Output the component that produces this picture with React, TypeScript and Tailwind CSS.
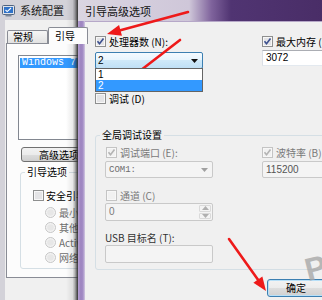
import React from "react";

function Check({ checked = false, disabled = false }: { checked?: boolean; disabled?: boolean }) {
  return (
    <svg width="11" height="11" viewBox="0 0 11 11" className="block shrink-0">
      <rect x="0.5" y="0.5" width="10" height="10" fill="#f7f7f7" stroke={disabled ? "#c4c4c4" : "#8e8f8f"} />
      <rect x="2" y="2" width="7" height="7" fill={disabled ? "#f1f1f1" : "#e4e4e6"} />
      {checked && (
        <path
          d="M2.5 5.3 L4.5 7.7 L8.5 2.6"
          fill="none"
          stroke={disabled ? "#b3b3b3" : "#3b4f8e"}
          strokeWidth="1.6"
        />
      )}
    </svg>
  );
}

function Radio() {
  return (
    <svg width="11" height="11" viewBox="0 0 11 11" className="block shrink-0">
      <circle cx="5.5" cy="5.5" r="5" fill="#f3f3f3" stroke="#c6c6c6" />
      <circle cx="5.5" cy="5.5" r="3.3" fill="#e7e7e7" />
    </svg>
  );
}

function Tri({ color, up = false }: { color: string; up?: boolean }) {
  return (
    <svg width="7" height="4" viewBox="0 0 7 4" className="block">
      <path d={up ? "M0 4H7L3.5 0Z" : "M0 0H7L3.5 4Z"} fill={color} />
    </svg>
  );
}

function MsIcon() {
  return (
    <svg width="13" height="13" viewBox="0 0 13 13" className="block shrink-0">
      <rect x="0.5" y="1.5" width="12" height="9" rx="1" fill="#dfe3ea" stroke="#4f6380" />
      <rect x="2" y="3" width="9" height="6" fill="#2f72c9" />
      <path d="M3.5 6 L5.2 7.6 L9 4" fill="none" stroke="#ffffff" strokeWidth="1.1" />
      <rect x="3.5" y="10.5" width="6" height="2" fill="#7c8799" />
    </svg>
  );
}

function Arrow({ x1, y1, x2, y2 }: { x1: number; y1: number; x2: number; y2: number }) {
  const dx = x2 - x1;
  const dy = y2 - y1;
  const len = Math.hypot(dx, dy);
  const ux = dx / len;
  const uy = dy / len;
  const hl = 14;
  const hw = 5.5;
  const bx = x2 - ux * hl;
  const by = y2 - uy * hl;
  const px = -uy;
  const py = ux;
  const pts = `${x2},${y2} ${bx + px * hw},${by + py * hw} ${bx - px * hw},${by - py * hw}`;
  return (
    <g>
      <line x1={x1} y1={y1} x2={bx + ux * 3} y2={by + uy * 3} stroke="#ee1a1a" strokeWidth="2.6" strokeLinecap="round" />
      <polygon points={pts} fill="#ee1a1a" />
    </g>
  );
}

function BackWindow() {
  return (
    <div className="absolute left-0 top-0 w-[150px] h-[300px] flex flex-col bg-[#d3d2d9]">
      <div className="h-[20px] shrink-0 flex items-center pl-[2px] gap-[5px]">
        <MsIcon />
        <span className="text-[11px] leading-[12px] text-[#1a1a1a] whitespace-nowrap">系统配置</span>
      </div>
      <div className="ml-[5px] flex-1 bg-[#f0f0f0] flex flex-col">
        <div className="mt-[7px] h-[16px] flex items-end pl-[2px]">
          <div className="w-[41px] h-[13px] border border-b-0 border-[#898c95] rounded-t-[2px] bg-[linear-gradient(#f5f5f5,#e2e2e2)] pl-[5px] leading-[12px] whitespace-nowrap">
            常规
          </div>
          <div className="relative z-10 -mb-px w-[40px] h-[17px] border border-b-0 border-[#898c95] rounded-t-[2px] bg-[#fcfcfc] pl-[6px] leading-[15px] whitespace-nowrap">
            引导
          </div>
        </div>
        <div className="ml-[1px] h-[235px] border border-[#898c95] bg-[#fcfcfc] flex flex-col items-start">
          <div className="ml-[11px] mt-[11px] w-[120px] h-[85px] border border-[#828790] bg-white pt-[2px] pl-[1px]">
            <div className="h-[10px] bg-[#3399ff] text-white font-['Liberation_Mono',monospace] text-[10px] leading-[10px] pl-[2px] whitespace-nowrap">
              Windows 7
            </div>
          </div>
          <div className="ml-[14px] mt-[7px] w-[76px] h-[15px] rounded-[3px] border border-[#707070] bg-[linear-gradient(#f2f2f2_0%,#ebebeb_50%,#dddddd_50%,#cfcfcf_100%)] flex items-center justify-center leading-[12px] whitespace-nowrap">
            高级选项
          </div>
          <fieldset className="ml-[13px] mt-[4px] w-[120px] h-[103px] border border-[#d5dfe5] rounded-[3px]">
            <legend className="ml-[4px] px-[2px] leading-[12px] whitespace-nowrap">引导选项</legend>
            <div className="ml-[12px] mt-[12px] h-[11px] flex items-center gap-[2px]">
              <Check />
              <span className="leading-[11px] whitespace-nowrap">安全引导</span>
            </div>
            <div className="ml-[24px] mt-[6px] flex flex-col gap-[4px] text-[#6d6d6d]">
              {["最小", "其他外壳", "Active Directory 修复", "网络"].map((t) => (
                <div key={t} className="h-[11px] flex items-center gap-[3px]">
                  <Radio />
                  <span className="leading-[11px] whitespace-nowrap">{t}</span>
                </div>
              ))}
            </div>
          </fieldset>
        </div>
      </div>
    </div>
  );
}

function FrontWindow() {
  return (
    <div className="absolute left-[66px] top-0 w-[290px] h-[300px] flex">
      <div className="w-[12px] shrink-0 h-full bg-[linear-gradient(to_right,rgba(0,0,0,0)_0%,rgba(0,0,0,0.08)_55%,rgba(0,0,0,0.3)_75%,#333333_100%)]" />
      <div className="flex-1 min-w-0 flex flex-col">
        <div className="h-[21px] shrink-0 bg-[linear-gradient(to_right,#dad5e1_0%,#cfc7d9_40%,#7f639c_48%,#503472_55%,#472b63_100%)] flex items-center pl-[7px]">
          <span className="text-[11px] leading-[12px] text-[#111] whitespace-nowrap">引导高级选项</span>
        </div>
        <div className="flex-1 flex min-w-0">
          <div className="w-[7px] shrink-0 bg-[linear-gradient(to_right,#b7a2d4,#9c83bf_40%,#a48dc6_70%,#d3c9e1)]" />
          <div className="flex-1 min-w-0 bg-[#f0f0f0] border-t border-[#b6a8c8] flex flex-col items-start">
            {/* top row */}
            <div className="flex pl-[10px] pt-[14px]">
              <div className="w-[108px] shrink-0 flex flex-col">
                <div className="h-[11px] flex items-center gap-[3px]">
                  <Check checked />
                  <span className="leading-[11px] whitespace-nowrap">处理器数 (N):</span>
                </div>
                <div className="relative mt-[5px] h-[17px] rounded-[2px] border border-[#3c7fb1] bg-[linear-gradient(#f4faff_0%,#e6f4fd_50%,#cfe9f9_50%,#bfe0f6_100%)] flex items-center pl-[2px]">
                  <span className="font-['Liberation_Sans',sans-serif] leading-[12px]">2</span>
                  <div className="ml-auto mr-[4px]">
                    <Tri color="#111" />
                  </div>
                  <div className="absolute left-[-1px] top-[15px] w-[108px] h-[24px] border border-[#646464] bg-white z-10 font-['Liberation_Sans',sans-serif]">
                    <div className="h-[11px] leading-[11px] pl-[2px]">1</div>
                    <div className="h-[11px] leading-[11px] pl-[2px] bg-[#3399ff] text-white">2</div>
                  </div>
                </div>
                <div className="mt-[24px] h-[11px] flex items-center gap-[3px]">
                  <Check />
                  <span className="leading-[11px] whitespace-nowrap">调试 (D)</span>
                </div>
              </div>
              <div className="ml-[59px] shrink-0 flex flex-col">
                <div className="h-[11px] flex items-center gap-[3px]">
                  <Check checked />
                  <span className="leading-[11px] whitespace-nowrap">最大内存 (M):</span>
                </div>
                <div className="mt-[3px] w-[110px] h-[16px] border border-[#abadb3] border-l-[#dbdfe6] border-r-[#dbdfe6] border-b-[#e3e9ef] bg-white pl-[3px] flex items-center font-['Liberation_Sans',sans-serif] leading-[12px]">
                  3072
                </div>
              </div>
            </div>

            {/* group box */}
            <fieldset className="ml-[10px] mt-[25px] w-[260px] shrink-0 h-[141px] border border-[#d5dfe5] rounded-[3px]">
              <legend className="ml-[4px] px-[2px] leading-[12px] whitespace-nowrap">全局调试设置</legend>
              <div className="pl-[9px] pt-[6px] flex">
                <div className="w-[108px] shrink-0 flex flex-col">
                  <div className="ml-[1px] h-[11px] flex items-center gap-[3px] text-[#7a7a7a]">
                    <Check checked disabled />
                    <span className="leading-[11px] whitespace-nowrap">调试端口 (E):</span>
                  </div>
                  <div className="mt-[3px] h-[17px] border border-[#c9c9c9] rounded-[2px] bg-[#f4f4f4] flex items-center pl-[3px] text-[#6d6d6d]">
                    <span className="font-['Liberation_Mono',monospace] text-[9px] leading-[12px]">COM1:</span>
                    <div className="ml-auto mr-[4px]">
                      <Tri color="#a0a0a0" />
                    </div>
                  </div>
                  <div className="ml-[1px] mt-[12px] h-[11px] flex items-center gap-[3px] text-[#7a7a7a]">
                    <Check disabled />
                    <span className="leading-[11px] whitespace-nowrap">通道 (C)</span>
                  </div>
                  <div className="mt-[2px] h-[18px] border border-[#c9c9c9] rounded-[2px] bg-[#f4f4f4] flex items-stretch">
                    <span className="flex-1 pl-[3px] leading-[16px] text-[#7a7a7a] font-['Liberation_Sans',sans-serif]">0</span>
                    <div className="w-[12px] my-[1px] mr-[1px] flex flex-col gap-[1px]">
                      <div className="flex-1 flex items-center justify-center border border-[#dadada] rounded-[1px]">
                        <Tri color="#b0b0b0" up />
                      </div>
                      <div className="flex-1 flex items-center justify-center border border-[#dadada] rounded-[1px]">
                        <Tri color="#b0b0b0" />
                      </div>
                    </div>
                  </div>
                  <div className="mt-[11px] h-[11px] leading-[11px] text-[#333] whitespace-nowrap">USB 目标名 (T):</div>
                  <div className="mt-[2px] h-[18px] border border-[#c9c9c9] rounded-[2px] bg-[#f4f4f4]" />
                </div>
                <div className="ml-[49px] shrink-0 flex flex-col">
                  <div className="h-[11px] flex items-center gap-[3px] text-[#7a7a7a]">
                    <Check checked disabled />
                    <span className="leading-[11px] whitespace-nowrap">波特率 (B)</span>
                  </div>
                  <div className="mt-[3px] w-[110px] h-[17px] border border-[#c9c9c9] rounded-[2px] bg-[#f4f4f4] pl-[3px] flex items-center text-[#555] font-['Liberation_Sans',sans-serif] leading-[12px]">
                    115200
                  </div>
                </div>
              </div>
            </fieldset>

            <div className="ml-[182px] mt-[9px] w-[58px] shrink-0 h-[18px] rounded-[3px] border border-[#3c7fb1] shadow-[inset_0_0_0_1px_#b8e0f8] bg-[linear-gradient(#f3f3f3_0%,#ececec_50%,#dedede_50%,#d0d0d0_100%)] flex items-center justify-center leading-[12px] whitespace-nowrap">
              确定
            </div>
          </div>
        </div>
      </div>
    </div>
  );
}

export default function App() {
  return (
    <div className="relative w-[322px] h-[300px] overflow-hidden bg-[#f0f0f0] font-['Noto_Sans_CJK_SC',sans-serif] text-[10px] text-black">
      <BackWindow />
      <FrontWindow />
      <div className="absolute left-[305px] top-[252px] rotate-[-14deg] font-['Liberation_Sans',sans-serif] font-bold text-[32px] leading-[32px] text-[#a8a8a8] opacity-80">
        P
      </div>
      <svg className="absolute inset-0 pointer-events-none" width="322" height="300" viewBox="0 0 322 300">
        <Arrow x1={188} y1={12} x2={107} y2={34} />
        <Arrow x1={180} y1={40} x2={123} y2={84} />
        <Arrow x1={229} y1={239} x2={266} y2={291} />
      </svg>
    </div>
  );
}
